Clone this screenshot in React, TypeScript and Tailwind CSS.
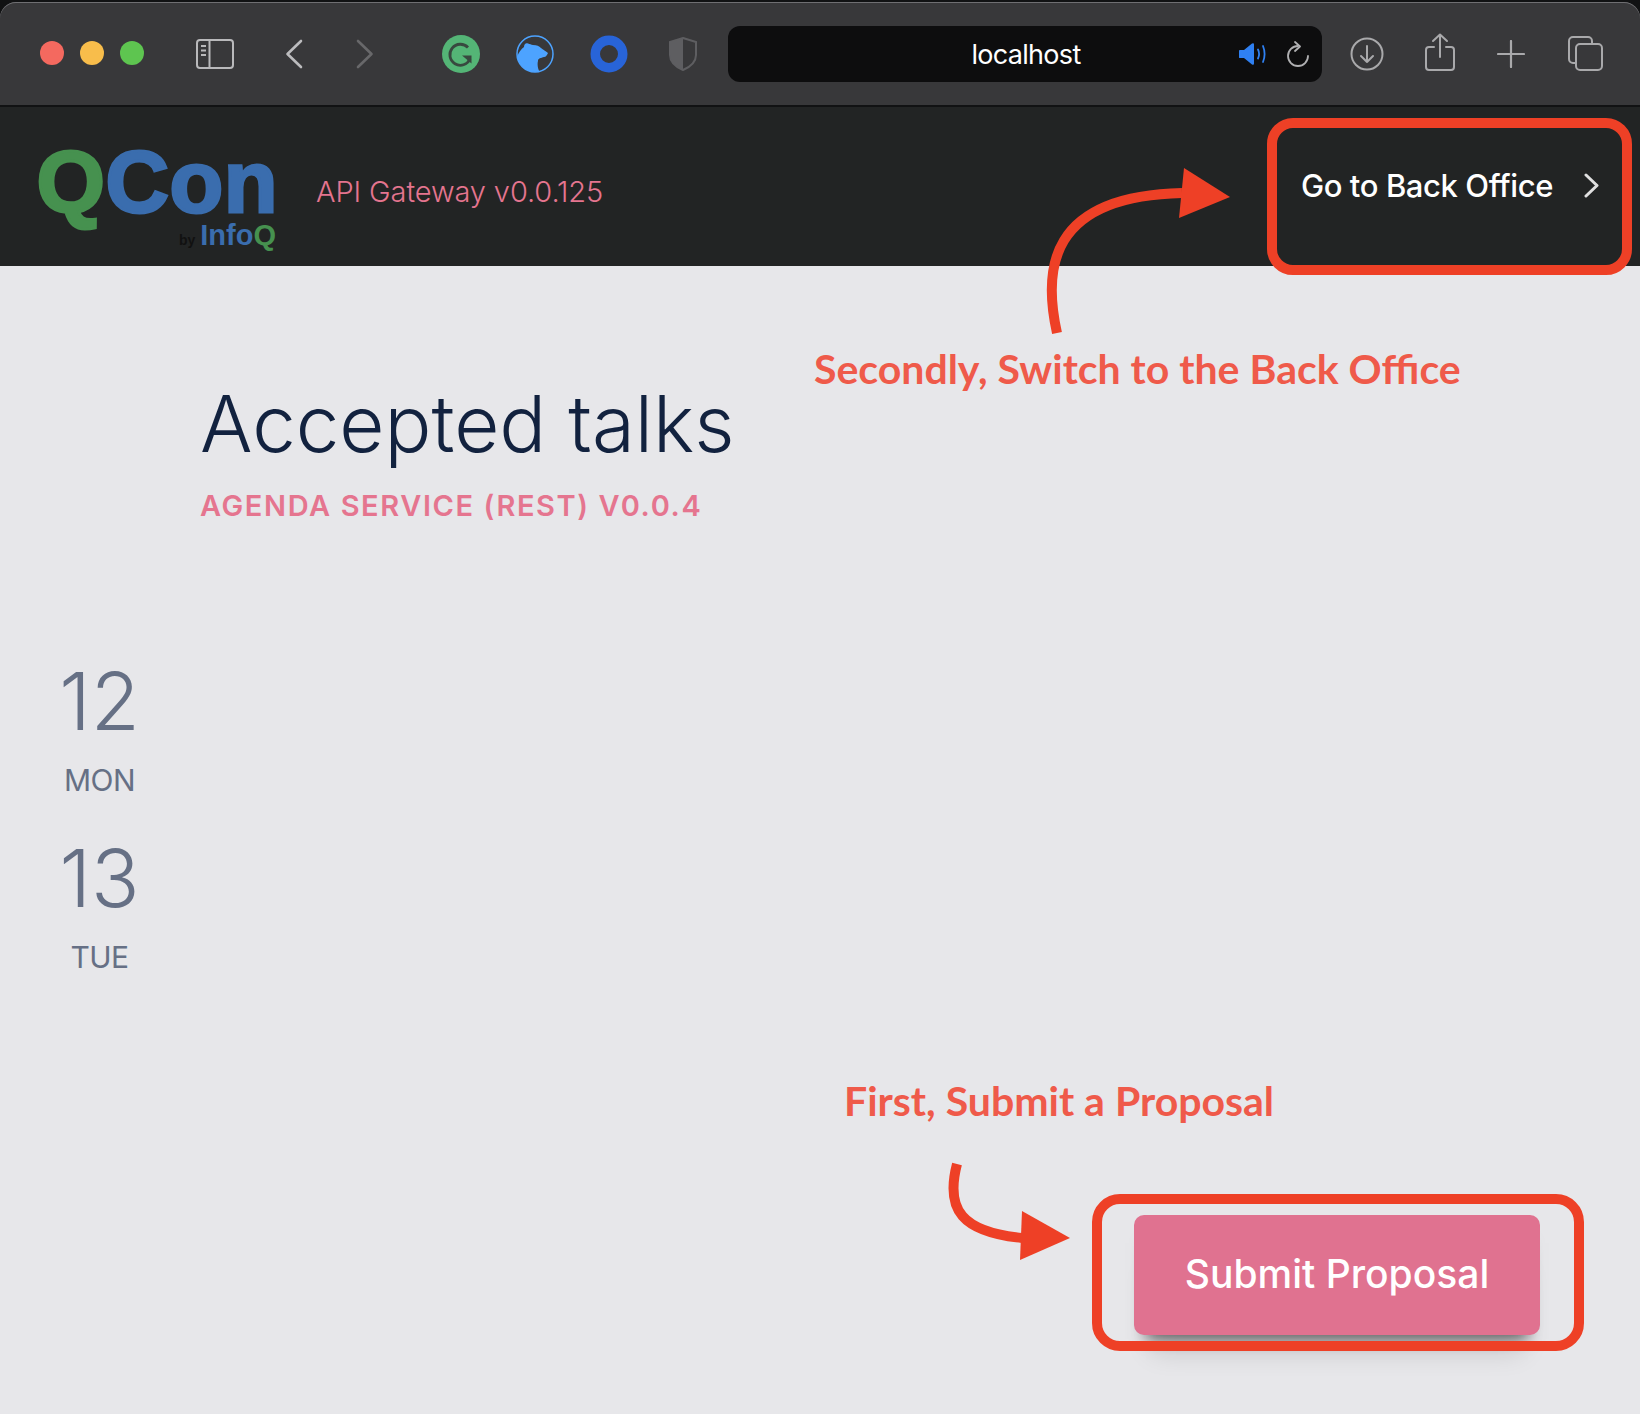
import React from "react"

const ui = "font-['Inter',sans-serif]"
const note = "font-['Lato',sans-serif]"

// Safari toolbar glyphs
const SidebarIcon = () => (
  <svg width="38" height="30" viewBox="0 0 38 30" fill="none" stroke="#b9b9bb" strokeWidth="2">
    <rect x="1" y="1" width="36" height="28" rx="3" />
    <path d="M13.5 1v28" />
    <path d="M5 7h5M5 11.5h5M5 16h5" strokeWidth="1.8" />
  </svg>
)

const Chevron = ({ dir, color }: { dir: "left" | "right"; color: string }) => (
  <svg width="18" height="30" viewBox="0 0 18 30" fill="none" stroke={color} strokeWidth="2.6" strokeLinecap="round" strokeLinejoin="round">
    <path d={dir === "left" ? "M16 2 2.5 15 16 28" : "M2 2l13.5 13L2 28"} />
  </svg>
)

const GrammarlyIcon = () => (
  <svg width="38" height="38" viewBox="0 0 38 38">
    <circle cx="19" cy="19" r="19" fill="#54b576" />
    <path d="M26 12.5A10.500 10.500 0 1 0 28 24" fill="none" stroke="#38493f" strokeWidth="2.800" />
    <path d="M20 20.500h9.500v8z" fill="#38493f" />
  </svg>
)

const BearIcon = () => (
  <svg width="38" height="38" viewBox="0 0 38 38">
    <defs>
      <clipPath id="bear-clip">
        <circle cx="19" cy="19" r="18" />
      </clipPath>
    </defs>
    <circle cx="19" cy="19" r="18" fill="#38383a" stroke="#4da3ff" strokeWidth="1.500" />
    <path
      clipPath="url(#bear-clip)"
      d="M1 22C3 17 5 14 8 12 8 9 10 7.500 12 8.500 14 9 15 9.500 17 10 21 10 23 11 25 13 27 15 30 16 32 18 31 20 30 22 28 22 25 23 22 23 22 26 21 30 22 34 24 38H0z"
      fill="#4da3ff"
    />
  </svg>
)

const ShieldIcon = () => (
  <svg width="28" height="34" viewBox="0 0 28 34">
    <path d="M14 1 27 5v13c0 7-6 12-13 15C7 30 1 25 1 18V5z" fill="none" stroke="#5e5e61" strokeWidth="2" />
    <path d="M14 1 1 5v13c0 7 6 12 13 15z" fill="#5e5e61" />
  </svg>
)

const SpeakerIcon = () => (
  <svg width="28" height="24" viewBox="0 0 28 24" fill="none">
    <path d="M1 8.500Q1 8 2 8h4l8-6.500q2-1 2 1v19q0 2-2 1L6 16H2q-1 0-1-.5z" fill="#2f80f2" />
    <path d="M20 7.500c1.500 3 1.500 6 0 9M25 4c2 5 2 11 0 16" stroke="#2f80f2" strokeWidth="1.800" strokeLinecap="round" />
  </svg>
)

const ReloadIcon = () => (
  <svg width="24" height="26" viewBox="0 0 24 26" fill="none" stroke="#b0b0b2" strokeWidth="1.800" strokeLinecap="round" strokeLinejoin="round">
    <path d="M12 5A10 10 0 1 0 22 15" />
    <path d="M9 1l5 4.500L9 10" />
  </svg>
)

const DownloadIcon = () => (
  <svg width="34" height="34" viewBox="0 0 34 34" fill="none" stroke="#a9a9ab" strokeWidth="2" strokeLinecap="round" strokeLinejoin="round">
    <circle cx="17" cy="17" r="15.500" />
    <path d="M17 9v16M11 19l6 6 6-6" />
  </svg>
)

const ShareIcon = () => (
  <svg width="30" height="38" viewBox="0 0 30 38" fill="none" stroke="#a9a9ab" strokeWidth="2" strokeLinecap="round" strokeLinejoin="round">
    <path d="M9 14H4a3 3 0 0 0-3 3v17a3 3 0 0 0 3 3h22a3 3 0 0 0 3-3V17a3 3 0 0 0-3-3h-5" />
    <path d="M15 24V2M8 8l7-6.500L22 8" />
  </svg>
)

const PlusIcon = () => (
  <svg width="28" height="28" viewBox="0 0 28 28" fill="none" stroke="#a9a9ab" strokeWidth="2.200" strokeLinecap="round">
    <path d="M14 1v26M1 14h26" />
  </svg>
)

const TabsIcon = () => (
  <svg width="35" height="35" viewBox="0 0 35 35" fill="none" stroke="#a9a9ab" strokeWidth="2">
    <path d="M7 27H5a4 4 0 0 1-4-4V5a4 4 0 0 1 4-4h15a4 4 0 0 1 4 4v3" />
    <rect x="8" y="8" width="26" height="26" rx="4" />
  </svg>
)

const RED = "#ee4026"

function Toolbar() {
  return (
    <div className="mt-[2px] h-[105px] rounded-t-[16px] border-b-2 border-[#111213] bg-[#38383a] shadow-[inset_0_1px_0_#6f6f72] flex items-center pl-[40px]">
      <div className="flex gap-[16px] -mt-[1px]">
        <span className="w-[24px] h-[24px] rounded-full bg-[#f4695f]" />
        <span className="w-[24px] h-[24px] rounded-full bg-[#f8bd4b]" />
        <span className="w-[24px] h-[24px] rounded-full bg-[#5ec550]" />
      </div>
      <div className="ml-[52px] flex"><SidebarIcon /></div>
      <div className="ml-[51px] flex"><Chevron dir="left" color="#bcbcbe" /></div>
      <div className="ml-[53px] flex"><Chevron dir="right" color="#68686a" /></div>
      <div className="ml-[68px] flex items-center gap-[36px]">
        <GrammarlyIcon />
        <BearIcon />
        <svg width="38" height="38" viewBox="0 0 38 38">
          <circle cx="19" cy="19" r="13.750" fill="none" stroke="#2864d8" strokeWidth="9.500" />
        </svg>
        <div className="ml-[5px] flex"><ShieldIcon /></div>
      </div>
      <div className="ml-[31px] w-[594px] h-[56px] rounded-[12px] bg-[#0d0d0e] relative flex items-center justify-center">
        <span className={`${ui} text-[27px] leading-none tracking-[-0.7px] text-white ml-[2px] mt-[2px]`}>localhost</span>
        <div className="absolute right-[12px] top-[15px] flex items-center gap-[20px]">
          <SpeakerIcon />
          <ReloadIcon />
        </div>
      </div>
      <div className="ml-[28px] flex items-center">
        <DownloadIcon />
        <div className="ml-[41px] -mt-[4px] flex"><ShareIcon /></div>
        <div className="ml-[42px] flex"><PlusIcon /></div>
        <div className="ml-[43px] flex"><TabsIcon /></div>
      </div>
    </div>
  )
}

function Header() {
  return (
    <header className="h-[159px] bg-[#222424] flex pl-[40px] pr-[40px] relative">
      <div className="mt-[31px] w-[236px] h-[112px] flex flex-col items-end font-['Liberation_Sans',sans-serif] font-bold">
        <div className="text-[88px] leading-none tracking-[0.5px] text-[#3a6dae] whitespace-nowrap [-webkit-text-stroke:3px_#3a6dae] -mr-[2px]">
          <span className="text-[#46914f] [-webkit-text-stroke:3px_#46914f]">Q</span>Con
        </div>
        <div className="-mt-[5px] flex items-baseline text-[29px] leading-none text-[#3a6dae] whitespace-nowrap">
          <span className="text-[14px] text-[#111] mr-[5px]">by</span>
          <span>Info</span>
          <span className="text-[#46914f]">Q</span>
        </div>
      </div>
      <div className={`${ui} ml-[40px] mt-[70px] text-[29px] leading-none font-light tracking-[-0.1px] text-[#e5758f] whitespace-nowrap`}>
        API Gateway v0.0.125
      </div>
      <div className={`${ui} ml-auto mt-[63px] h-[32px] flex items-start text-[31px] leading-none font-medium tracking-[-0.4px] text-white whitespace-nowrap`}>
        Go to Back Office
        <svg className="ml-[31px] mt-[3px]" width="16" height="25" viewBox="0 0 16 25" fill="none" stroke="#e0e0e0" strokeWidth="3" strokeLinecap="round" strokeLinejoin="round">
          <path d="M2 2l11 10.500L2 23" />
        </svg>
      </div>
    </header>
  )
}

function Day({ num, name, top }: { num: string; name: string; top: string }) {
  return (
    <div className={`${ui} ${top} w-[199px] text-center text-[#667085]`}>
      <div className="text-[80px] leading-[78px] font-light tracking-[0px]">{num}</div>
      <div className="mt-[25px] text-[30px] leading-none tracking-[-0.5px]">{name}</div>
    </div>
  )
}

export default function App() {
  return (
    <div className="relative w-[1640px] h-[1414px] overflow-hidden bg-[#111213]">
      <Toolbar />
      <Header />

      <main className="h-[1148px] bg-[#e7e7ea]">
        <div className={`${ui} pl-[200px] pt-[119px]`}>
          <h1 className="text-[78px] leading-none font-light text-[#12223f] whitespace-nowrap">Accepted talks</h1>
          <p className="mt-[28px] text-[29px] leading-none font-semibold tracking-[1.6px] text-[#e5758f] whitespace-nowrap">
            AGENDA SERVICE (REST) V0.0.4
          </p>
        </div>

        <Day num="12" name="MON" top="mt-[142px]" />
        <Day num="13" name="TUE" top="mt-[44px]" />

        <div className="mt-[243px] flex justify-end pr-[100px]">
          <button className={`${ui} w-[406px] h-[120px] rounded-[10px] bg-[#e07290] text-[39px] font-medium text-white pb-[2px] shadow-[0_16px_14px_-12px_rgba(0,0,0,0.55),0_34px_28px_-18px_rgba(0,0,0,0.14)]`}>
            Submit Proposal
          </button>
        </div>
      </main>

      {/* Annotations drawn over the screenshot */}
      <div className="absolute left-[1267px] top-[118px] w-[365px] h-[157px] rounded-[26px] border-[10px] border-[#ee4026]" />
      <div className="absolute left-[1092px] top-[1194px] w-[492px] h-[157px] rounded-[28px] border-[10px] border-[#ee4026]" />

      <svg className="absolute left-[1040px] top-[160px]" width="200" height="180" viewBox="0 0 200 180" fill="none">
        <path d="M17 173C3 110 8 36 142 33" stroke={RED} strokeWidth="10" />
        <path d="M144 8 190 37 139 58z" fill={RED} />
      </svg>
      <svg className="absolute left-[940px] top-[1160px]" width="140" height="110" viewBox="0 0 140 110" fill="none">
        <path d="M17 4C5 50 22 72 82 78" stroke={RED} strokeWidth="10" />
        <path d="M82 51 130 78 80 100z" fill={RED} />
      </svg>

      <div className={`${note} absolute left-[814px] top-[343px] text-[41px] leading-[52px] font-bold text-[#ef5a4a] whitespace-nowrap`}>
        Secondly, Switch to the Back Office
      </div>
      <div className={`${note} absolute left-[844px] top-[1075px] text-[41px] leading-[52px] font-bold text-[#ef5a4a] whitespace-nowrap`}>
        First, Submit a Proposal
      </div>
    </div>
  )
}
